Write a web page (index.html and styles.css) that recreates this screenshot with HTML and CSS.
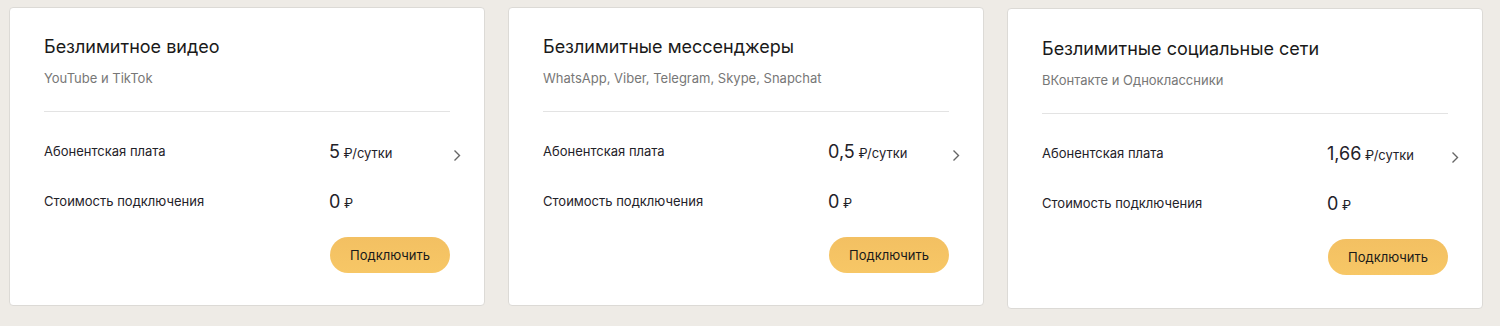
FILE: index.html
```html
<!DOCTYPE html>
<html lang="ru">
  <head>
    <meta charset="utf-8">
    <title>Опции</title>
    <link rel="stylesheet" href="styles.css">
  </head>
  <body>
    <div class="options">
      <div class="option-card">
        <div class="option-head">
          <h3 class="option-title">Безлимитное видео</h3>
          <p class="option-sub">YouTube и TikTok</p>
        </div>
        <div class="option-rows">
          <div class="option-row">
            <span class="row-label">Абонентская плата</span>
            <span class="row-value"><b>5</b> ₽/сутки</span>
            <svg class="row-arrow" width="8" height="13" viewBox="0 0 8 13"><path d="M1.5 1.5 L6.5 6.5 L1.5 11.5" fill="none" stroke="#666" stroke-width="1.4"/></svg>
          </div>
          <div class="option-row">
            <span class="row-label">Стоимость подключения</span>
            <span class="row-value"><b>0</b> ₽</span>
          </div>
        </div>
        <div class="option-foot">
          <button class="connect-btn" type="button">Подключить</button>
        </div>
      </div>

      <div class="option-card">
        <div class="option-head">
          <h3 class="option-title">Безлимитные мессенджеры</h3>
          <p class="option-sub">WhatsApp, Viber, Telegram, Skype, Snapchat</p>
        </div>
        <div class="option-rows">
          <div class="option-row">
            <span class="row-label">Абонентская плата</span>
            <span class="row-value"><b>0,5</b> ₽/сутки</span>
            <svg class="row-arrow" width="8" height="13" viewBox="0 0 8 13"><path d="M1.5 1.5 L6.5 6.5 L1.5 11.5" fill="none" stroke="#666" stroke-width="1.4"/></svg>
          </div>
          <div class="option-row">
            <span class="row-label">Стоимость подключения</span>
            <span class="row-value"><b>0</b> ₽</span>
          </div>
        </div>
        <div class="option-foot">
          <button class="connect-btn" type="button">Подключить</button>
        </div>
      </div>

      <div class="option-card option-card--tall">
        <div class="option-head">
          <h3 class="option-title">Безлимитные социальные сети</h3>
          <p class="option-sub">ВКонтакте и Одноклассники</p>
        </div>
        <div class="option-rows">
          <div class="option-row">
            <span class="row-label">Абонентская плата</span>
            <span class="row-value"><b>1,66</b> ₽/сутки</span>
            <svg class="row-arrow" width="8" height="13" viewBox="0 0 8 13"><path d="M1.5 1.5 L6.5 6.5 L1.5 11.5" fill="none" stroke="#666" stroke-width="1.4"/></svg>
          </div>
          <div class="option-row">
            <span class="row-label">Стоимость подключения</span>
            <span class="row-value"><b>0</b> ₽</span>
          </div>
        </div>
        <div class="option-foot">
          <button class="connect-btn" type="button">Подключить</button>
        </div>
      </div>
    </div>
  </body>
</html>
```

FILE: styles.css
```css
body {
  margin: 0;
  background-color: #eeebe6;
  font-family: Inter, "Noto Sans", sans-serif;
  color: #1f2229;
}

.options {
  display: flex;
  align-items: flex-start;
  gap: 23px;
  padding: 7px 9px;
}

.option-card {
  box-sizing: border-box;
  width: 476px;
  padding: 27px 34px 32px;
  background: #fff;
  border: 1px solid #dcdad6;
  border-radius: 4px;
}

/* third card sits a pixel lower in the mockup */
.option-card--tall {
  margin-top: 1px;
  padding-top: 28px;
  padding-bottom: 33px;
}

.option-head {
  padding-bottom: 24px;
  border-bottom: 1px solid #e3e3e3;
}

.option-title {
  margin: 0;
  font-size: 18px;
  font-weight: 400;
  line-height: 24px;
  color: #1a1a1a;
}

.option-sub {
  margin: 10px 0 0;
  font-size: 13px;
  line-height: 18px;
  color: #777;
}

.option-rows {
  display: flex;
  flex-direction: column;
  gap: 26px;
  padding-top: 27px;
}

.option-row {
  display: grid;
  grid-template-columns: 285px 1fr 8px;
  align-items: center;
  height: 24px;
  margin-right: -11px;
  font-size: 13px;
}

.row-value {
  font-size: 13px;
}

.row-value b {
  font-size: 18px;
  font-weight: 400;
}

.row-arrow {
  margin-top: 8px;
}

.option-foot {
  display: flex;
  justify-content: flex-end;
  margin-top: 24px;
}

.connect-btn {
  height: 36px;
  padding: 0 20px;
  border: 0;
  border-radius: 18px;
  background: linear-gradient(#f3c062, #f7c766);
  font-family: inherit;
  font-size: 13px;
  color: #1a1a1a;
}
```
